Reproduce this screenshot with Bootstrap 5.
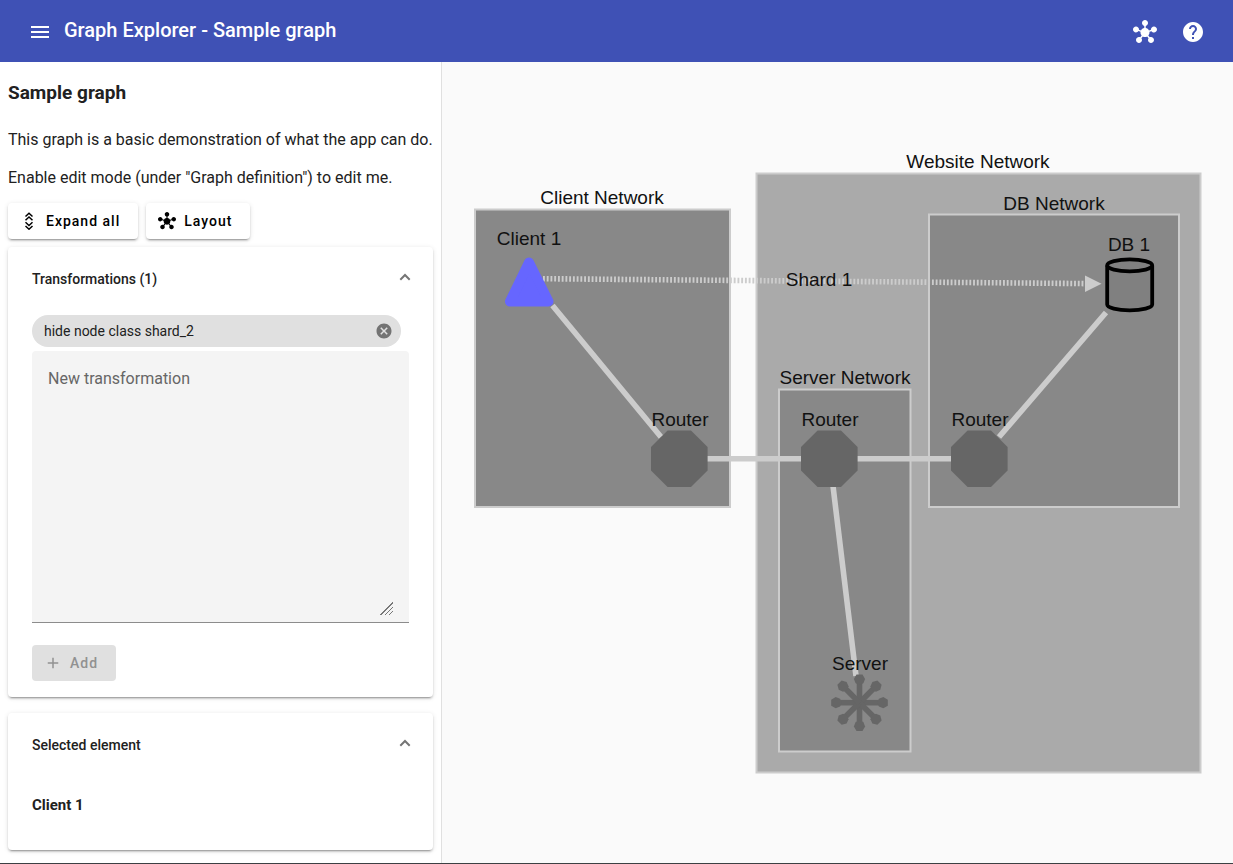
<!DOCTYPE html>
<html lang="en">
<head>
<meta charset="utf-8">
<meta name="viewport" content="width=device-width, initial-scale=1">
<title>Graph Explorer - Sample graph</title>
<link rel="stylesheet" href="https://cdn.jsdelivr.net/npm/bootstrap@5.3.0/dist/css/bootstrap.min.css">
<style>
  body { font-family: Roboto, sans-serif; font-size: 16px; line-height: 22px; color: #212121; background: #fafafa; }
  svg { display: block; fill: currentColor; }
  .app-shell { border-bottom: 1px solid #3c4043; }
  .app-bar { background: #3f51b5; color: #fff; padding: 8px 16px 6px; }
  .app-title { font-size: 20px; font-weight: 500; line-height: 24px; margin: 0 0 4px; }
  .icon-btn { width: 48px; height: 48px; padding: 12px; border: 0; background: none; color: inherit; }
  .side-panel { width: 442px; max-width: 100%; background: #fff; border-right: 1px solid #e0e0e0; padding: 17px 8px 12px; }
  .graph-title { font-size: 19px; font-weight: 700; line-height: 28px; margin-bottom: 22px; }
  .graph-notes { margin-bottom: 14px; }
  .graph-notes p { margin-bottom: 0; }
  .raised { background: #fff; border: 0; border-radius: 4px; box-shadow: 0 3px 1px -2px rgba(0,0,0,.2), 0 2px 2px 0 rgba(0,0,0,.14), 0 1px 5px 0 rgba(0,0,0,.12); }
  .action { height: 36px; padding: 0 18px 0 12px; border: 0; border-radius: 4px; font-size: 14px; font-weight: 500; letter-spacing: 1px; color: #000; }
  .action:disabled { background: #e0e0e0; color: #919191; opacity: 1; }
  .panel-toggle { height: 64px; padding: 0 22px 0 24px; border: 0; background: none; font-size: 14px; font-weight: 500; color: inherit; }
  .panel-toggle svg { color: #757575; margin-bottom: 4px; }
  .panel-content { padding: 4px 24px 16px; font-size: 14px; }
  .filter-chip { height: 32px; margin: 0 8px 4px 0; padding: 0 8px 0 12px; border-radius: 16px; background: #e0e0e0; }
  .chip-remove { padding: 0; border: 0; background: none; color: #737373; }
  .field-box { background: #f4f4f4; border-bottom: 1px solid #8c8c8c; border-radius: 4px 4px 0 0; padding: 16px 16px 7px; margin-bottom: 22px; }
  .field-box textarea { height: 248px; padding: 0; border: 0; background: none; font-size: 16px; line-height: 24px; outline: 0; resize: both; }
  .field-box textarea::placeholder { color: #666; }
  .field-box textarea::-webkit-resizer { background: linear-gradient(135deg, #f4f4f4 55%, transparent 55%), repeating-linear-gradient(135deg, #777 0 1px, #f4f4f4 1px 3px); }
  .element-name { font-size: 15px; font-weight: 700; line-height: 20px; margin: 14px 0 19px; }
  .graph-pane { min-width: 0; min-height: 400px; position: relative; }
  .graph-pane svg { position: absolute; inset: 0; width: 100%; height: 100%; }
  .graph-pane text { font-family: "Liberation Sans", Arial, sans-serif; font-size: 19px; text-anchor: middle; fill: #111; }
</style>
</head>
<body>
<svg width="0" height="0" class="position-absolute" aria-hidden="true">
  <symbol id="hub" viewBox="0 0 24 24"><path d="M8.4 18.2c.38.5.6 1.12.6 1.8 0 1.66-1.34 3-3 3s-3-1.34-3-3 1.34-3 3-3c.44 0 .85.09 1.23.26l1.41-1.77c-.92-1.03-1.29-2.39-1.09-3.69l-2.03-.68c-.54.83-1.46 1.38-2.52 1.38-1.66 0-3-1.34-3-3s1.34-3 3-3 3 1.34 3 3c0 .07 0 .14-.01.21l2.03.68c.64-1.21 1.82-2.09 3.22-2.32V5.91C9.96 5.57 9 4.4 9 3c0-1.66 1.34-3 3-3s3 1.34 3 3c0 1.4-.96 2.57-2.25 2.91v2.16c1.4.23 2.58 1.11 3.22 2.32l2.03-.68c-.01-.07-.01-.14-.01-.21 0-1.66 1.34-3 3-3s3 1.34 3 3-1.34 3-3 3c-1.06 0-1.98-.55-2.52-1.37l-2.03.68c.2 1.29-.16 2.65-1.09 3.69l1.41 1.77c.38-.17.79-.26 1.23-.26 1.66 0 3 1.34 3 3s-1.34 3-3 3-3-1.34-3-3c0-.68.22-1.3.6-1.8l-1.41-1.77c-1.35.75-3.01.76-4.37 0L8.4 18.2z"/></symbol>
  <symbol id="chevron-up" viewBox="0 0 12 8"><path d="M1.3 6.7 6 2l4.7 4.7" fill="none" stroke="currentColor" stroke-width="2"/></symbol>
</svg>

<div class="app-shell d-flex flex-column min-vh-100">
  <header class="app-bar d-flex align-items-center">
    <button class="icon-btn" type="button" aria-label="Menu">
      <svg width="24" height="24" viewBox="0 0 24 24"><path d="M3 18h18v-2H3v2zm0-5h18v-2H3v2zm0-7v2h18V6H3z"/></svg>
    </button>
    <h1 class="app-title me-auto">Graph Explorer - Sample graph</h1>
    <button class="icon-btn" type="button" aria-label="Layout graph"><svg width="24" height="24"><use href="#hub"/></svg></button>
    <button class="icon-btn" type="button" aria-label="Help">
      <svg width="24" height="24" viewBox="0 0 24 24"><path d="M12 2C6.48 2 2 6.48 2 12s4.48 10 10 10 10-4.48 10-10S17.52 2 12 2zm1 17h-2v-2h2v2zm2.07-7.75l-.9.92C13.45 12.9 13 13.5 13 15h-2v-.5c0-1.1.45-2.1 1.17-2.83l1.24-1.26c.37-.36.59-.86.59-1.41 0-1.1-.9-2-2-2s-2 .9-2 2H8c0-2.21 1.79-4 4-4s4 1.79 4 4c0 .88-.36 1.68-.93 2.25z"/></svg>
    </button>
  </header>

  <div class="d-flex flex-grow-1 flex-wrap flex-md-nowrap">
    <aside class="side-panel flex-shrink-0">
      <h2 class="graph-title">Sample graph</h2>
      <div class="graph-notes d-flex flex-column gap-3">
        <p>This graph is a basic demonstration of what the app can do.</p>
        <p>Enable edit mode (under "Graph definition") to edit me.</p>
      </div>

      <div class="d-flex gap-2 mb-2">
        <button class="action raised d-flex align-items-center gap-2" type="button">
          <svg width="18" height="18" viewBox="0 0 18 18"><path d="M5.500 4.500 9 1.300l3.500 3.200M5.500 8.200 9 5l3.500 3.200M5.500 10.300 9 13.500l3.500-3.200M5.500 14 9 17.200l3.500-3.200" fill="none" stroke="currentColor" stroke-width="1.500"/></svg>
          Expand all
        </button>
        <button class="action raised d-flex align-items-center gap-2" type="button">
          <svg width="18" height="18"><use href="#hub"/></svg>
          Layout
        </button>
      </div>

      <section class="raised mb-3">
        <button class="panel-toggle d-flex align-items-center justify-content-between w-100" type="button" data-bs-toggle="collapse" data-bs-target="#transformations" aria-expanded="true" aria-controls="transformations">
          Transformations (1)
          <svg width="12" height="8"><use href="#chevron-up"/></svg>
        </button>
        <div id="transformations" class="collapse show">
          <div class="panel-content">
            <div class="filter-chip d-flex align-items-center justify-content-between">
              hide node class shard_2
              <button class="chip-remove" type="button" aria-label="Remove transformation">
                <svg width="18" height="18" viewBox="0 0 24 24"><path d="M12 2C6.47 2 2 6.47 2 12s4.47 10 10 10 10-4.47 10-10S17.53 2 12 2zm5 13.59L15.59 17 12 13.41 8.41 17 7 15.59 10.59 12 7 8.41 8.41 7 12 10.59 15.59 7 17 8.41 13.41 12 17 15.59z"/></svg>
              </button>
            </div>
            <div class="field-box">
              <textarea class="d-block w-100" placeholder="New transformation" aria-label="New transformation"></textarea>
            </div>
            <button class="action d-flex align-items-center gap-2" type="button" disabled>
              <svg width="18" height="18" viewBox="0 0 24 24"><path d="M19 13h-6v6h-2v-6H5v-2h6V5h2v6h6v2z"/></svg>
              Add
            </button>
          </div>
        </div>
      </section>

      <section class="raised">
        <button class="panel-toggle d-flex align-items-center justify-content-between w-100" type="button" data-bs-toggle="collapse" data-bs-target="#selected" aria-expanded="true" aria-controls="selected">
          Selected element
          <svg width="12" height="8"><use href="#chevron-up"/></svg>
        </button>
        <div id="selected" class="collapse show">
          <div class="panel-content"><h3 class="element-name">Client 1</h3></div>
        </div>
      </section>
    </aside>

    <main class="graph-pane flex-grow-1">
      <svg viewBox="442 62 791 801" role="img" aria-label="Network graph">
        <defs>
          <path id="router" d="M-28.300-11.700-11.700-28.300h23.400L28.300-11.700v23.400L11.700 28.300h-23.400L-28.300 11.700z" fill="#666"/>
          <g id="spoke"><path d="M-2.800 0v-20h5.600V0z"/><path d="M-3-28.300h6l2.600 4.500-1.700 4.400-3.900 1.600-3.900-1.600-1.700-4.400z"/></g>
        </defs>
        <g stroke="#ccc" stroke-width="2">
          <rect x="475" y="209.500" width="255" height="297.500" fill="#888"/>
          <rect x="756.500" y="173.500" width="444" height="599" fill="#aaa"/>
          <rect x="929" y="214.500" width="250" height="292.500" fill="#888"/>
          <rect x="779" y="389.500" width="131.500" height="362" fill="#888"/>
        </g>
        <g fill="none" stroke="#ccc" stroke-width="5.600">
          <path d="M552.500 305.500 661 437M707 458.700h95M857 458.700h95M1106 312.500 999 437M833 486l23 190"/>
          <path d="M543 278.700 1086 283.600" stroke-dasharray="1.870 1.870"/>
        </g>
        <path d="M1085 275.500v16.500l16.500-8.300z" fill="#ccc"/>
        <path d="M529 262.500 510 301.500h38.500z" fill="#66f" stroke="#66f" stroke-width="10" stroke-linejoin="round"/>
        <use href="#router" x="679.300" y="458.700"/>
        <use href="#router" x="829.300" y="458.700"/>
        <use href="#router" x="979.300" y="458.700"/>
        <g transform="translate(859.500 702.700)" fill="#666">
          <use href="#spoke"/>
          <use href="#spoke" transform="rotate(90)"/>
          <use href="#spoke" transform="rotate(180)"/>
          <use href="#spoke" transform="rotate(270)"/>
          <use href="#spoke" transform="rotate(45)"/>
          <use href="#spoke" transform="rotate(135)"/>
          <use href="#spoke" transform="rotate(225)"/>
          <use href="#spoke" transform="rotate(315)"/>
        </g>
        <path d="M1107.200 265.500v39c0 3.200 10 5.800 22.500 5.800s22.500-2.600 22.500-5.800v-39" fill="#808080" stroke="#000" stroke-width="3.800"/>
        <ellipse cx="1129.700" cy="265.300" rx="22.500" ry="6" fill="#808080" stroke="#000" stroke-width="3.800"/>
        <text x="602" y="204">Client Network</text>
        <text x="978" y="168">Website Network</text>
        <text x="1054" y="210">DB Network</text>
        <text x="845" y="384">Server Network</text>
        <text x="529" y="245">Client 1</text>
        <text x="819" y="286">Shard 1</text>
        <text x="1129" y="251">DB 1</text>
        <text x="680" y="426">Router</text>
        <text x="830" y="426">Router</text>
        <text x="980" y="426">Router</text>
        <text x="860" y="670">Server</text>
      </svg>
    </main>
  </div>
</div>
<script src="https://cdn.jsdelivr.net/npm/bootstrap@5.3.0/dist/js/bootstrap.bundle.min.js"></script>
</body>
</html>
